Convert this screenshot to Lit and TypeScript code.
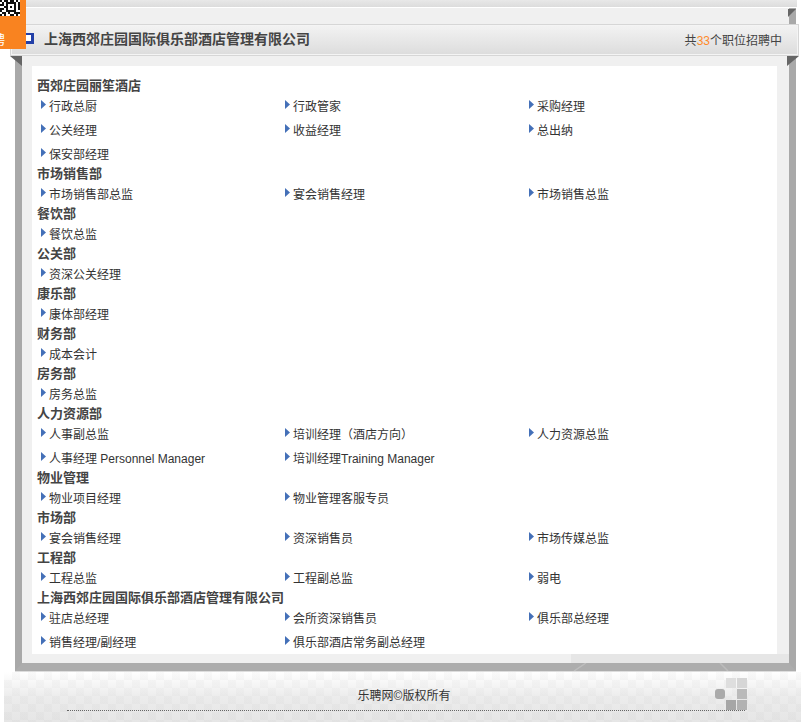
import { LitElement, html, css, svg } from "lit";
import { customElement } from "lit/decorators.js";

const GROUPS: { t: string; items: string[] }[] = [
  { t: "西郊庄园丽笙酒店", items: ["行政总厨", "行政管家", "采购经理", "公关经理", "收益经理", "总出纳", "保安部经理"] },
  { t: "市场销售部", items: ["市场销售部总监", "宴会销售经理", "市场销售总监"] },
  { t: "餐饮部", items: ["餐饮总监"] },
  { t: "公关部", items: ["资深公关经理"] },
  { t: "康乐部", items: ["康体部经理"] },
  { t: "财务部", items: ["成本会计"] },
  { t: "房务部", items: ["房务总监"] },
  { t: "人力资源部", items: ["人事副总监", "培训经理（酒店方向）", "人力资源总监", "人事经理 Personnel Manager", "培训经理Training Manager"] },
  { t: "物业管理", items: ["物业项目经理", "物业管理客服专员"] },
  { t: "市场部", items: ["宴会销售经理", "资深销售员", "市场传媒总监"] },
  { t: "工程部", items: ["工程总监", "工程副总监", "弱电"] },
  { t: "上海西郊庄园国际俱乐部酒店管理有限公司", items: ["驻店总经理", "会所资深销售员", "俱乐部总经理", "销售经理/副经理", "俱乐部酒店常务副总经理"] },
];

// QR fragment, 2px modules
const QR = [
  "1011011010",
  "0101111101",
  "1101000101",
  "0011010101",
  "1101000101",
  "1001111100",
  "0110100111",
  "1010011010",
];

@customElement("app-root")
export class AppRoot extends LitElement {
  static styles = css`
    :host {
      display: block;
      width: 801px;
      height: 722px;
      position: relative;
      overflow: hidden;
      background: #fff;
      font-family: "Liberation Sans", "Noto Sans CJK SC", sans-serif;
      font-size: 12px;
      color: #333;
    }
    .strip {
      height: 7px;
      margin: 0 4px 1px 4px;
      background: linear-gradient(#e8e8e8, #dcdcdc);
    }
    .frame {
      position: relative;
      width: 781px;
      height: 663px;
      box-sizing: border-box;
      margin-left: 15px;
      padding: 16px 7px 0 10px;
      background: #f0f0f0;
      border-left: 7px solid #a9a9a9;
      border-right: 7px solid #a9a9a9;
      border-bottom: 8px solid #adadad;
      display: flex;
      flex-direction: column;
      box-shadow: 0 1px 0 #ddd;
    }
    .head {
      flex: none;
      height: 32px;
      box-sizing: border-box;
      margin: 0 -17px 0 -22px;
      border: 1px solid #d6d6d6;
      background: linear-gradient(#f3f3f3, #dcdcdc);
      box-shadow: inset 0 0 0 1px #f4f4f4;
      display: flex;
      align-items: center;
      padding: 0 16px 0 11px;
      position: relative;
    }
    .logo {
      width: 12px;
      height: 11px;
      box-sizing: border-box;
      border: 3px solid #2340a8;
      border-width: 2px 3px 3px 2px;
      background: #fff;
      margin-top: -4px;
      margin-right: 10px;
    }
    .name {
      font-size: 14px;
      font-weight: bold;
      color: #444;
      flex: 1;
      padding-bottom: 4px;
    }
    .count { color: #444; padding-bottom: 2px; }
    .count b { font-weight: normal; color: #ff8a2a; }
    .card {
      flex: none;
      height: 588px;
      margin: 10px 5px 0 0;
      box-sizing: border-box;
      background: #fff;
      padding: 12px 0 0 5px;
    }
    .band {
      flex: 1;
      margin: 0 -7px 0 -10px;
      background: linear-gradient(to right, #f0f0f0 0 549px, #e6e6e6 549px);
    }
    .gt {
      height: 16px;
      line-height: 16px;
      font-size: 13px;
      font-weight: bold;
      color: #444;
    }
    .grid {
      display: grid;
      grid-template-columns: repeat(3, 244px);
      grid-auto-rows: 24px;
    }
    .it {
      display: flex;
      line-height: 24px;
      white-space: nowrap;
    }
    .it span { margin-top: 1px; }
    .it svg {
      flex: none;
      width: 5px;
      height: 9px;
      margin: 6px 3px 0 4px;
    }
    .fold { position: absolute; }
    .fold.l { left: -12px; top: 48px; width: 19px; height: 10px; }
    .fold.r { right: -10px; top: 48px; width: 12px; height: 10px; }
    .fold.t { right: -7px; top: 1px; width: 8px; height: 8px; }
    .streaks { position: absolute; left: 550px; top: 655px; width: 160px; height: 8px; opacity: 0.45; }
    .foot {
      height: 50px;
      box-sizing: border-box;
      margin: 1px 0 0 4px;
      position: relative;
      padding: 16px 0 0 0;
      background:
        repeating-conic-gradient(rgba(150, 150, 150, 0.05) 0 25%, transparent 0 50%) 0 0 / 16px 16px,
        linear-gradient(#fff, #ececec 50%, #e6e6e6);
    }
    .copy {
      height: 16px;
      line-height: 16px;
      text-align: center;
      color: #333;
      margin-left: 3px;
    }
    .rule {
      margin: 6px 0 0 63px;
      width: 678px;
      border-top: 1px dotted #666;
    }
    .marks {
      position: absolute;
      left: 711px;
      top: 6px;
      display: grid;
      grid-template-columns: repeat(3, 10px);
      grid-auto-rows: 10px;
      gap: 1px;
    }
    .marks i { display: block; }
    .m1 { grid-area: 1 / 2; background: #dedede; }
    .m2 { grid-area: 1 / 3; background: #d6d6d6; }
    .m3 { grid-area: 2 / 1; background: #aaa; border-radius: 3px; }
    .m4 { grid-area: 2 / 3; background: #bababa; }
    .m5 { grid-area: 3 / 2; background: #a6a6a6; }
    .m6 { grid-area: 3 / 3; background: #b2b2b2; }
    .badge {
      position: absolute;
      left: 0;
      top: 0;
      width: 26px;
      height: 49px;
      background: #f98320;
      overflow: hidden;
      color: #fff;
      font-size: 13px;
      line-height: 16px;
    }
    .badge span { position: absolute; left: -8px; top: 32px; }
    .qr { position: absolute; left: 0; top: 0; width: 20px; height: 16px; background: #fff; }
  `;

  private arrow() {
    return html`<svg viewBox="0 0 5 9"><path d="M0 0 L5 4.5 L0 9 Z" fill="#4470b8"></path></svg>`;
  }

  render() {
    return html`
      <div class="strip"></div>
      <div class="frame">
        <svg class="fold t" viewBox="0 0 8 8"><path d="M0 0H8L0 8Z" fill="#666"></path></svg>
        <div class="head">
          <div class="logo"></div>
          <div class="name">上海西郊庄园国际俱乐部酒店管理有限公司</div>
          <div class="count">共<b>33</b>个职位招聘中</div>
        </div>
        <svg class="fold l" viewBox="0 0 19 10"><path d="M0 0H12V10Z" fill="#666"></path></svg>
        <svg class="fold r" viewBox="0 0 12 10"><path d="M0 0H12L0 10Z" fill="#666"></path></svg>
        <div class="card">
          ${GROUPS.map(
            (g) => html`
              <div class="gt">${g.t}</div>
              <div class="grid">
                ${g.items.map((i) => html`<div class="it">${this.arrow()}<span>${i}</span></div>`)}
              </div>
            `
          )}
        </div>
        <div class="band"></div>
        <svg class="streaks" viewBox="0 0 160 8">
          <path d="M14 0L2 8M148 0L156 8" stroke="#d0d0d0" stroke-width="1.5" fill="none"></path>
        </svg>
      </div>
      <div class="foot">
        <div class="copy">乐聘网©版权所有</div>
        <div class="rule"></div>
        <div class="marks">
          <i class="m1"></i><i class="m2"></i><i class="m3"></i><i class="m4"></i><i class="m5"></i><i class="m6"></i>
        </div>
      </div>
      <div class="badge"><span>聘</span></div>
      <svg class="qr" viewBox="0 0 20 16" shape-rendering="crispEdges">
        ${QR.flatMap((row, y) =>
          [...row].map((c, x) => (c === "1" ? svg`<rect x=${x * 2} y=${y * 2} width="2" height="2" fill="#111"></rect>` : null))
        )}
      </svg>
    `;
  }
}
